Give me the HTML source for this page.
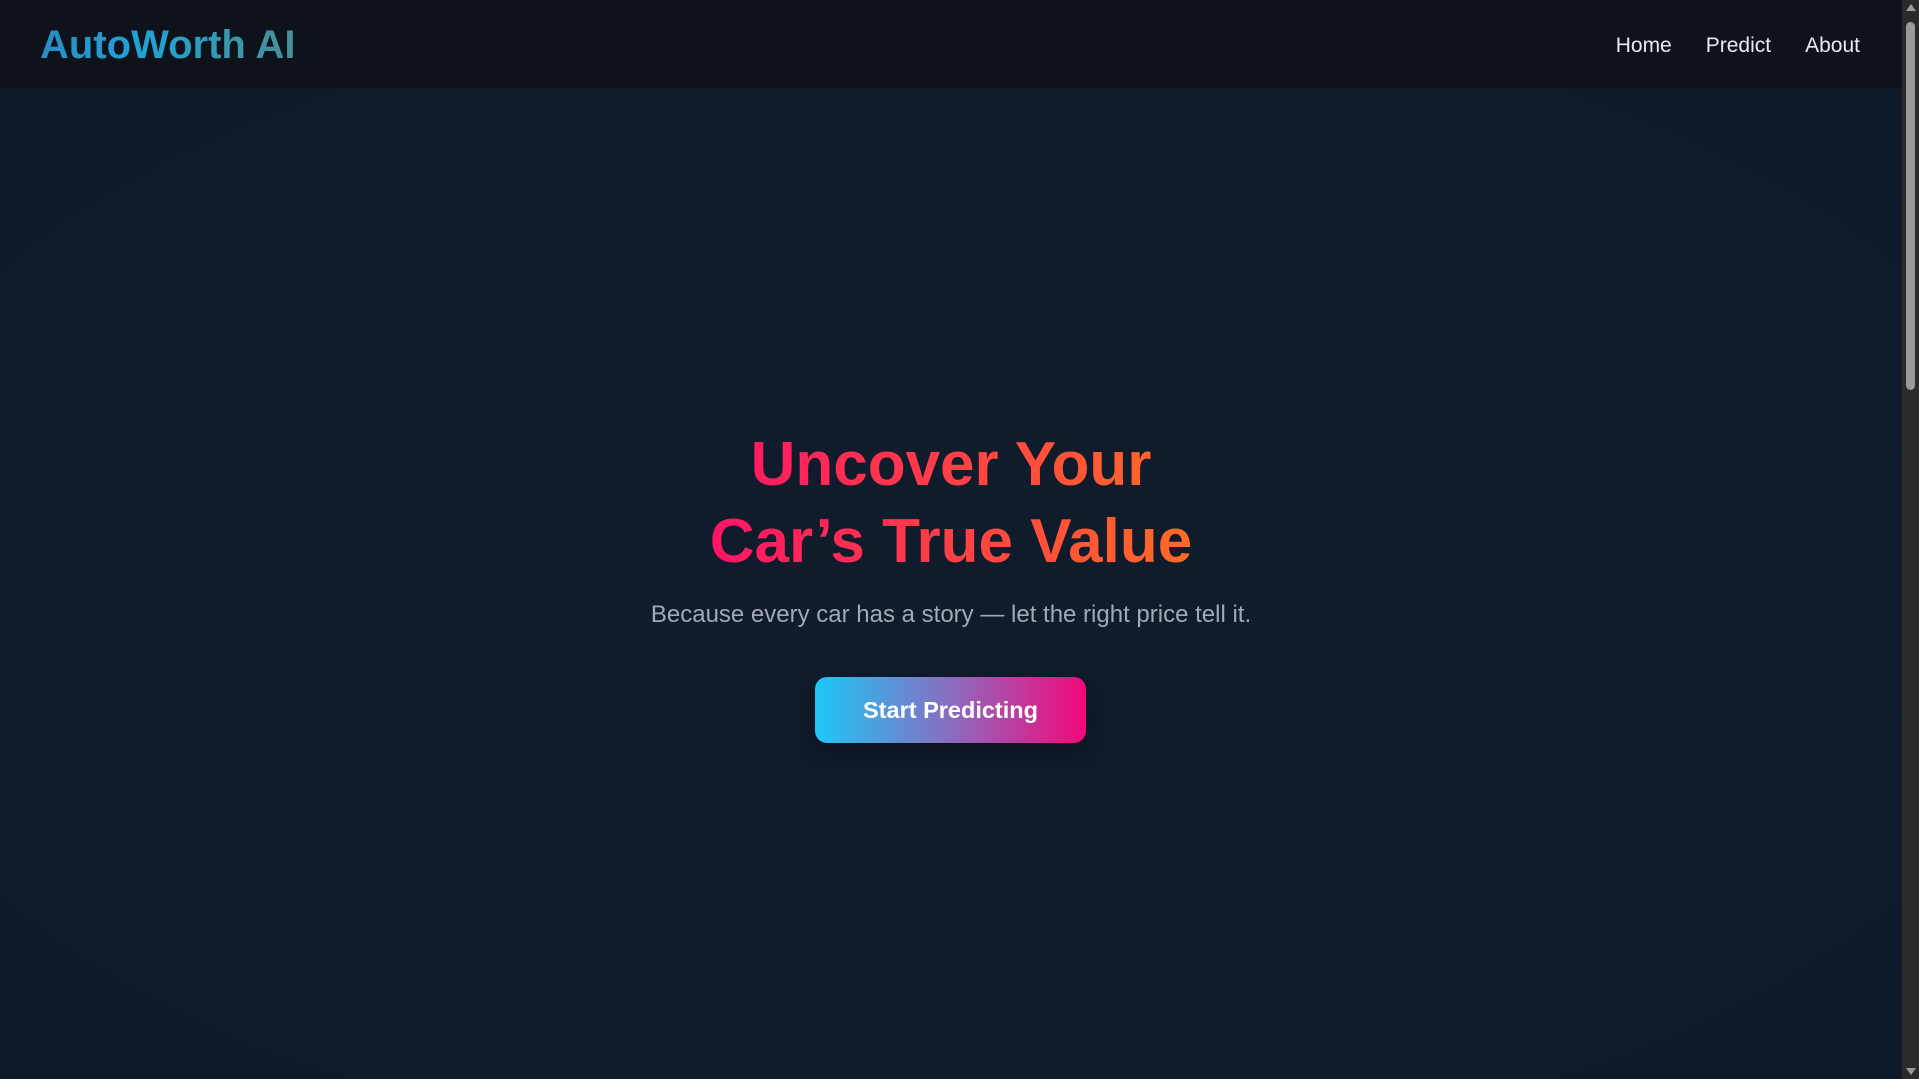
<!DOCTYPE html>
<html><head><meta charset="utf-8"><style>
html,body{margin:0;padding:0;width:1919px;height:1079px;overflow:hidden;background:#101b2b;font-family:"Liberation Sans",sans-serif;}
.sb{position:absolute;right:0;top:0;width:17px;height:1079px;background:#2a2a2a;}
.sb .th{position:absolute;left:4px;top:22px;width:9px;height:368px;background:#9a9a9a;border-radius:5px;}
.sb .up{position:absolute;left:4px;top:4px;width:0;height:0;border-left:5px solid transparent;border-right:5px solid transparent;border-bottom:7px solid #9a9a9a;}
.sb .dn{position:absolute;left:4px;bottom:4px;width:0;height:0;border-left:5px solid transparent;border-right:5px solid transparent;border-top:7px solid #9a9a9a;}
header{position:absolute;left:0;top:0;width:1902px;height:88px;background:#0e121a;}
.logo{position:absolute;left:40px;top:23px;font-size:40px;font-weight:bold;background:linear-gradient(90deg,#2a8cc4,#1fa3d6 40%,#4a8f94);-webkit-background-clip:text;background-clip:text;color:transparent;}
nav{position:absolute;right:42px;top:34px;font-size:21px;color:#e8ebef;}
nav span{margin-left:34px;}
main{position:absolute;left:0;top:88px;width:1902px;height:991px;background:radial-gradient(ellipse at 50% 50%,#101b2c,#0f1a29);}
h1{position:absolute;left:0;width:1902px;top:426px;margin:0;text-align:center;font-size:62px;line-height:77px;font-weight:bold;}
h1 span{display:inline-block;background:linear-gradient(90deg,#ff1466,#ff6b26);-webkit-background-clip:text;background-clip:text;color:transparent;}
p{position:absolute;left:0;width:1902px;top:601px;margin:0;text-align:center;font-size:24px;color:#a3a9b3;}
.btn{position:absolute;left:815px;top:677px;width:271px;height:66px;border-radius:12px;background:linear-gradient(90deg,#1cc8f7,#8a6cc0 50%,#f3077a);color:#fff;font-weight:bold;font-size:23.5px;line-height:66px;text-align:center;box-shadow:0 8px 20px rgba(0,0,0,.35);}
</style></head><body>
<header><div class="logo">AutoWorth AI</div><nav><span>Home</span><span>Predict</span><span>About</span></nav></header>
<main></main>
<h1><span>Uncover Your<br>Car’s True Value</span></h1>
<p>Because every car has a story — let the right price tell it.</p>
<div class="btn">Start Predicting</div>
<div class="sb"><div class="up"></div><div class="th"></div><div class="dn"></div></div>
</body></html>
